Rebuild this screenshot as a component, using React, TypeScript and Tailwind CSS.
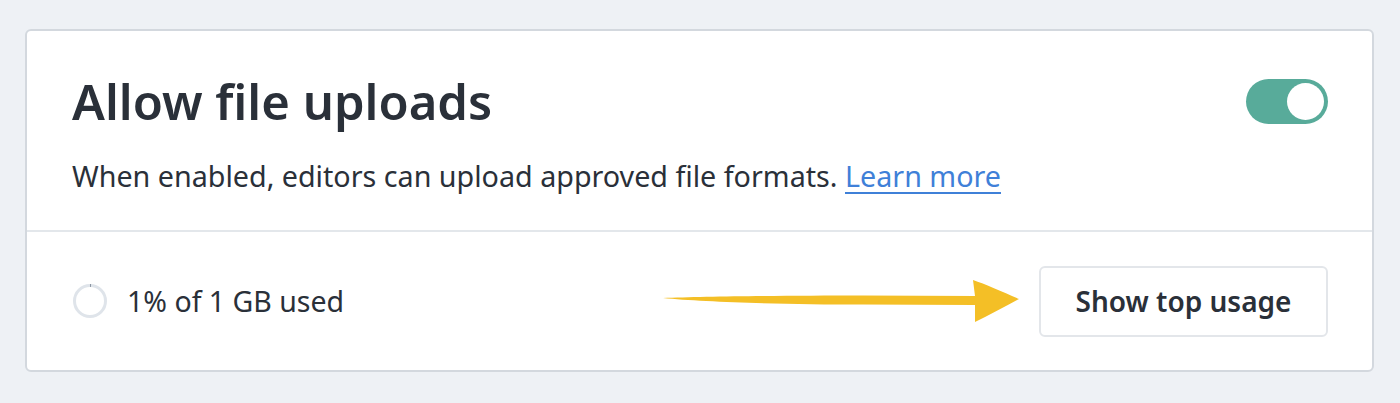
import React from 'react';

function UsageRing() {
  return (
    <svg width="36" height="36" viewBox="0 0 36 36">
      <circle cx="18" cy="18" r="15.5" fill="none" stroke="#dfe4ea" strokeWidth="3" />
      <path d="M18 2.5 A15.5 15.5 0 0 1 19 2.53" fill="none" stroke="#8c96a3" strokeWidth="3" />
    </svg>
  );
}

function Arrow() {
  return (
    <svg width="360" height="50" viewBox="0 0 360 50" className="shrink-0">
      <path
        d="M0 22 C40 20.5 120 19.5 200 19.5 L312 20 L310 4 C322 8 340 16 356 23 C342 31 326 39 312 46 L312 29 L200 28.5 C120 28.5 40 26 0 22 Z"
        fill="#f4bf26"
      />
    </svg>
  );
}

export default function App() {
  return (
    <div
      className="w-[1400px] h-[403px] bg-[#eef1f5] pt-[29px] pl-[25px]"
      style={{ fontFamily: '"Noto Sans", "Open Sans", sans-serif' }}
    >
      <div className="w-[1349px] h-[343px] bg-white border-2 border-[#d3d8de] rounded-[6px] flex flex-col">
        {/* Header */}
        <div className="h-[201px] border-b-2 border-[#e3e7eb] pl-[45px] pr-[44px] pt-[39px] flex flex-col">
          <div className="flex items-center justify-between">
            <h1 className="text-[49px] leading-[62px] font-semibold text-[#2a3039]">Allow file uploads</h1>
            <button className="w-[82px] h-[45px] rounded-full bg-[#58ab9a] flex items-center justify-end pr-[4px]">
              <span className="w-[37px] h-[37px] rounded-full bg-white block" />
            </button>
          </div>
          <p className="mt-[24px] text-[28.7px] leading-[40px] text-[#2a3039]">
            When enabled, editors can upload approved file formats.{' '}
            <a href="#" className="text-[#3f80d8] underline underline-offset-[5px] decoration-2">
              Learn more
            </a>
          </p>
        </div>
        {/* Usage row */}
        <div className="flex-1 flex items-center pl-[45px] pr-[44px]">
          <UsageRing />
          <span className="ml-[19px] text-[28.5px] text-[#2a3039]">1% of 1 GB used</span>
          <div className="flex-1" />
          <Arrow />
          <button className="ml-[16px] w-[289px] h-[71px] border-2 border-[#e3e6ea] rounded-[6px] text-[28px] font-semibold text-[#2a3039]">
            Show top usage
          </button>
        </div>
      </div>
    </div>
  );
}
